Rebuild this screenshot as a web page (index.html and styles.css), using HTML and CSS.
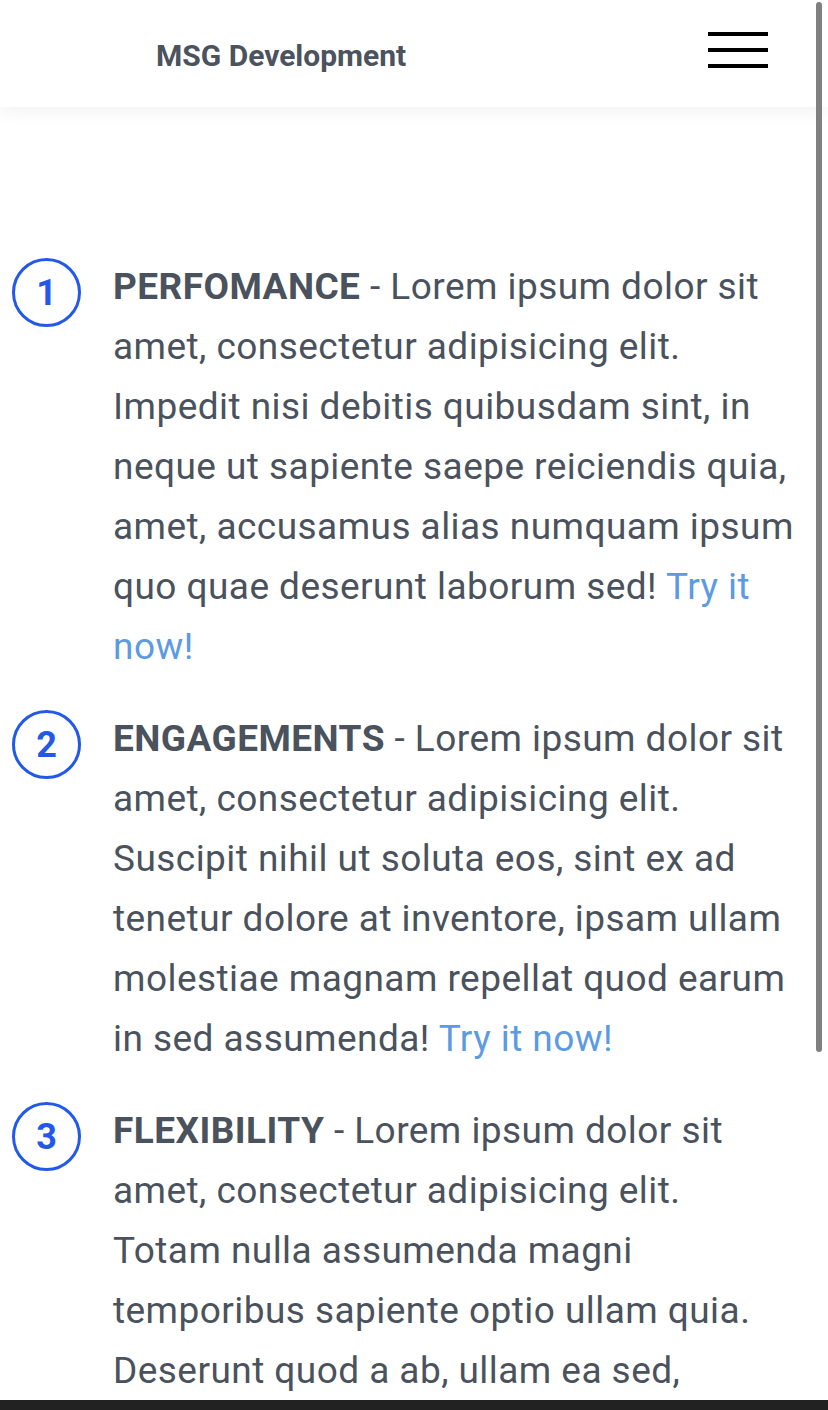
FILE: index.html
```html
<!DOCTYPE html>
<html lang="en">
<head>
<meta charset="utf-8">
<title>MSG Development</title>
<link rel="stylesheet" href="styles.css">
</head>
<body>
<header class="topbar">
  <div class="brand">MSG Development</div>
  <button class="burger" aria-label="Menu">
    <span></span><span></span><span></span>
  </button>
</header>
<main class="content">
  <ol class="features">
    <li class="feature">
      <div class="num">1</div>
      <p class="text"><strong>PERFOMANCE</strong> - Lorem ipsum dolor sit amet, consectetur adipisicing elit. Impedit nisi debitis quibusdam sint, in neque ut sapiente saepe reiciendis quia, amet, accusamus alias numquam ipsum quo quae deserunt laborum sed! <a href="#">Try it now!</a></p>
    </li>
    <li class="feature">
      <div class="num">2</div>
      <p class="text"><strong>ENGAGEMENTS</strong> - Lorem ipsum dolor sit amet, consectetur adipisicing elit. Suscipit nihil ut soluta eos, sint ex ad tenetur dolore at inventore, ipsam ullam molestiae magnam repellat quod earum in sed assumenda! <a href="#">Try it now!</a></p>
    </li>
    <li class="feature">
      <div class="num">3</div>
      <p class="text"><strong>FLEXIBILITY</strong> - Lorem ipsum dolor sit amet, consectetur adipisicing elit. Totam nulla assumenda magni temporibus sapiente optio ullam quia. Deserunt quod a ab, ullam ea sed, quibusdam. <a href="#">Try it now!</a></p>
    </li>
  </ol>
</main>
<div class="scrollbar"></div>
<div class="navbar"></div>
</body>
</html>
```
FILE: styles.css
```css
* { box-sizing: border-box; }
html, body { margin: 0; padding: 0; }
body {
  width: 828px;
  height: 1410px;
  overflow: hidden;
  background: #ffffff;
  font-family: Roboto, "Noto Sans", Arial, sans-serif;
  color: #4a525d;
}
.topbar {
  height: 107px;
  display: flex;
  align-items: center;
  justify-content: space-between;
  padding: 0 60px 0 156px;
  background: #fff;
  box-shadow: 0 4px 18px rgba(0,0,0,0.06);
  position: relative;
}
.brand {
  font-size: 30px;
  font-weight: 700;
  color: #4b535e;
  margin-top: 4px;
}
.burger {
  width: 60px;
  height: 36px;
  padding: 0;
  border: 0;
  background: none;
  display: flex;
  flex-direction: column;
  justify-content: space-between;
  margin-top: -8px;
}
.burger span {
  display: block;
  height: 4px;
  width: 60px;
  background: #000;
}
.content {
  padding: 150px 34px 0 12px;
}
.features {
  list-style: none;
  margin: 0;
  padding: 0;
  display: flex;
  flex-direction: column;
  gap: 32px;
}
.feature {
  display: flex;
  align-items: flex-start;
  gap: 32px;
}
.num {
  flex: none;
  width: 69px;
  height: 69px;
  margin-top: 1px;
  border: 3px solid #2359e8;
  border-radius: 50%;
  color: #2359e8;
  font-weight: 700;
  font-size: 36px;
  display: flex;
  align-items: center;
  justify-content: center;
}
.text {
  margin: 0;
  font-size: 37px;
  line-height: 60px;
  letter-spacing: 0.45px;
  color: #4a525d;
}
.text strong { font-weight: 700; color: #4a525d; }
.text a { color: #5c9be2; text-decoration: none; }
.scrollbar {
  position: fixed;
  left: 816px;
  top: 2px;
  width: 6px;
  height: 1050px;
  border-radius: 3px;
  background: #808080;
}
.navbar {
  position: fixed;
  left: 0;
  right: 0;
  bottom: 0;
  height: 10px;
  background: #222222;
}
```
